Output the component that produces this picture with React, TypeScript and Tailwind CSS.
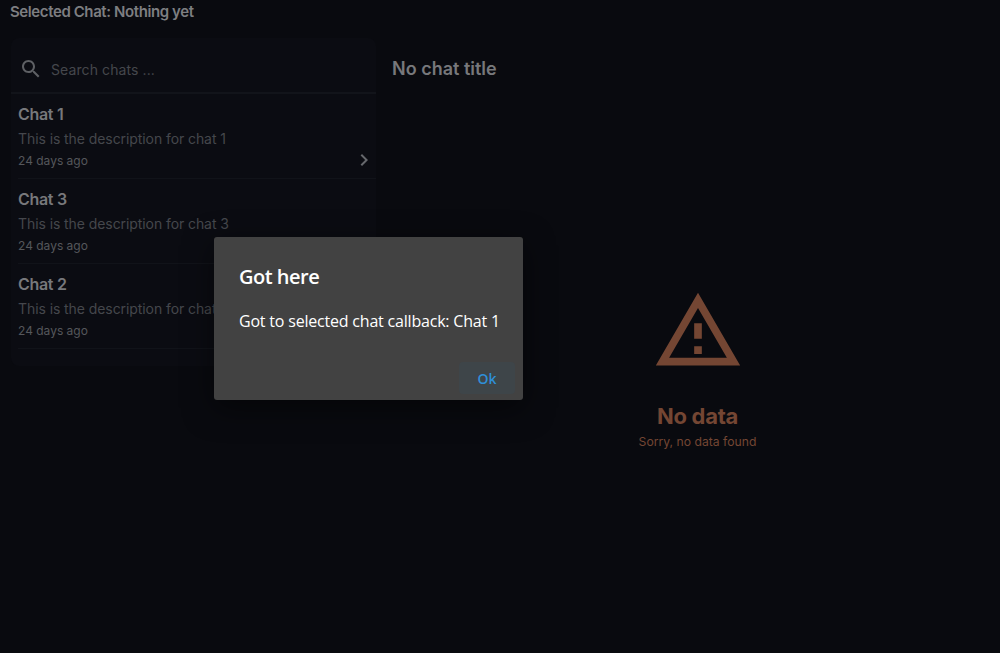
const chats = [
  { title: "Chat 1", description: "This is the description for chat 1", time: "24 days ago", selected: true },
  { title: "Chat 3", description: "This is the description for chat 3", time: "24 days ago", selected: false },
  { title: "Chat 2", description: "This is the description for chat 2", time: "24 days ago", selected: false },
];

export default function App() {
  return (
    <div className="relative h-[653px] w-[1000px] overflow-hidden bg-[#090a0f] font-['Inter','Liberation_Sans',sans-serif]">
      <p className="h-[23px] pl-[10px] pt-[3px] text-[15px] leading-[18px] font-semibold tracking-[-0.4px] text-[#7d7e81]">
        Selected Chat: Nothing yet
      </p>

      <div className="flex gap-[16px] pl-[11px] pt-[15px]">
        <aside className="h-[328px] w-[365px] rounded-[8px] bg-[#0b0c12]">
          <div className="flex h-[56px] items-center border-b-2 border-[#12141a] pl-[8px] pt-[8px]">
            <svg viewBox="0 0 24 24" className="h-[24px] w-[24px] fill-[#5e6064]">
              <path d="M15.5 14h-.79l-.28-.27C15.41 12.59 16 11.11 16 9.5 16 5.91 13.09 3 9.5 3S3 5.91 3 9.5 5.91 16 9.5 16c1.61 0 3.09-.59 4.23-1.57l.27.28v.79l5 4.99L20.49 19l-4.99-5zm-6 0C7.01 14 5 11.99 5 9.5S7.01 5 9.5 5 14 7.01 14 9.5 11.99 14 9.5 14z" />
            </svg>
            <span className="ml-[8px] text-[14px] tracking-[0.1px] text-[#45474c]">Search chats ...</span>
          </div>
          {chats.map((chat) => (
            <div key={chat.title} className="relative ml-[7px] h-[85px] border-b border-[#111319] pt-[9px]">
              <h3 className="text-[16px] leading-[22px] font-semibold tracking-[-0.3px] text-[#77787b]">{chat.title}</h3>
              <p className="mt-[4px] text-[14px] leading-[20px] tracking-[-0.08px] whitespace-nowrap text-[#45474c]">{chat.description}</p>
              <p className="mt-[3px] text-[12px] leading-[18px] text-[#55575b]">{chat.time}</p>
              {chat.selected && (
                <svg viewBox="0 0 24 24" className="absolute top-[54px] right-[0px] h-[24px] w-[24px] fill-[#66686c]">
                  <path d="M10 6 8.59 7.41 13.17 12l-4.58 4.59L10 18l6-6z" />
                </svg>
              )}
            </div>
          ))}
        </aside>

        <main className="flex-1">
          <h2 className="pt-[18px] text-[18px] leading-[26px] font-semibold tracking-[0px] text-[#77787b]">No chat title</h2>
          <div className="mr-[-3px] mt-[203px] flex flex-col items-center">
            <svg viewBox="0 0 24 24" className="h-[92px] w-[92px] fill-[#744633]">
              <path d="M12 5.99 19.53 19H4.47L12 5.99M12 2 1 21h22L12 2zm1 14h-2v2h2v-2zm0-6h-2v4h2v-4z" />
            </svg>
            <h3 className="mt-[24px] text-[22px] leading-[30px] font-bold tracking-[-0.3px] text-[#744633]">No data</h3>
            <p className="mt-[2px] text-[12.2px] leading-[18px] text-[#744633]">Sorry, no data found</p>
          </div>
        </main>
      </div>

      <div className="absolute top-[237px] left-[214px] flex h-[163px] w-[309px] flex-col rounded-[3px] bg-[#424242] font-['Open_Sans','Liberation_Sans',sans-serif] shadow-[0_8px_30px_rgba(0,0,0,0.5)]">
        <h1 className="pl-[25px] pt-[24px] text-[20px] leading-[32px] font-semibold tracking-[-0.5px] text-white">Got here</h1>
        <p className="pl-[25px] pt-[16px] text-[16px] leading-[24px] tracking-[-0.2px] whitespace-nowrap text-white">
          Got to selected chat callback: Chat 1
        </p>
        <div className="mt-auto flex justify-end pb-[6px] pr-[8px]">
          <button className="h-[32px] w-[56px] rounded-[4px] bg-[#3e4549] text-[14px] font-semibold text-[#2f8fd8]">Ok</button>
        </div>
      </div>
    </div>
  );
}
